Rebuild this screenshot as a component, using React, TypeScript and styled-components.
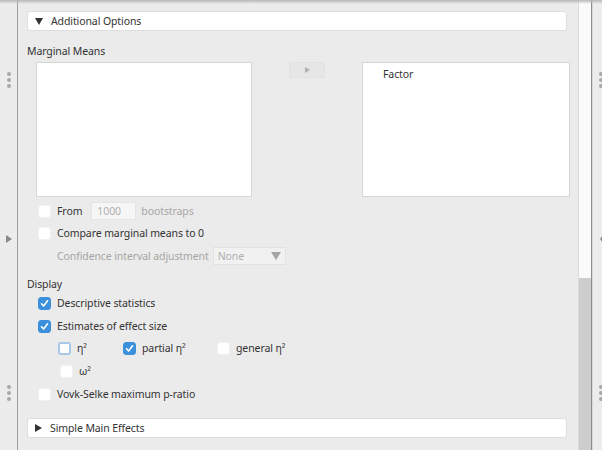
import React from "react";
import styled, { createGlobalStyle } from "styled-components";

const Global = createGlobalStyle`
  html, body { margin: 0; padding: 0; background: #ececec; }
  body { font-family: "Noto Sans", "DejaVu Sans", sans-serif; font-size: 10.5px; letter-spacing: -0.1px; color: #333; }
`;

const Page = styled.div`
  display: flex;
  width: 602px;
  height: 450px;
  overflow: hidden;
  position: relative;
  &::before {
    content: "";
    position: absolute;
    left: 0; right: 0; top: 0; height: 4px;
    background: linear-gradient(#b8b8b8, rgba(236,236,236,0));
    pointer-events: none;
  }
`;

const Rail = styled.div<{ $w: number; $side: "left" | "right" }>`
  width: ${p => p.$w}px;
  flex: none;
  background: #ececec;
  ${p => (p.$side === "left" ? "border-right: 1px solid #9e9e9e;" : "")}
  display: flex;
  flex-direction: column;
  align-items: ${p => (p.$side === "left" ? "center" : "flex-end")};
  padding-top: 72px;
  box-sizing: border-box;
`;

const Dots = styled.div<{ $mt?: number }>`
  display: flex;
  flex-direction: column;
  gap: 2px;
  margin-top: ${p => p.$mt ?? 0}px;
  & > span { width: 4px; height: 4px; border-radius: 50%; background: #a8a8a8; display: block; }
`;

const RailArrow = styled.div<{ $mt: number; $dir: "right" | "left" }>`
  margin-top: ${p => p.$mt}px;
  width: 0; height: 0;
  border-top: 4px solid transparent;
  border-bottom: 4px solid transparent;
  ${p => (p.$dir === "right" ? "border-left: 6px solid #8a8a8a;" : "border-right: 3px solid #8a8a8a;")}
`;

const Main = styled.div`
  width: 560px;
  flex: none;
  background: #ebebeb;
  padding: 11px 0 0 9px;
  box-sizing: border-box;
  display: flex;
  flex-direction: column;
`;

const Scroll = styled.div`
  width: 13px;
  flex: none;
  display: flex;
  flex-direction: column;
  border-right: 1px solid #8e8e8e;
  box-shadow: 1px 0 0 #d8d8d8;
  margin-right: 2px;
`;
const Track = styled.div`
  height: 278px; background: #fafafa; border-left: 1px solid #dcdcdc;
`;
const Thumb = styled.div`
  flex: 1; background: #cdcdcd; border-left: 1px solid #dcdcdc;
`;

const Section = styled.div`
  width: 540px;
  height: 20px;
  box-sizing: border-box;
  background: #fff;
  border: 1px solid #dedede;
  border-radius: 3px;
  display: flex;
  align-items: center;
  padding-left: 7px;
  gap: 8px;
  font-size: 10.5px;
  color: #333;
`;

const Tri = styled.span<{ $down?: boolean }>`
  width: 0; height: 0;
  ${p =>
    p.$down
      ? "border-left: 4px solid transparent; border-right: 4px solid transparent; border-top: 7px solid #333; margin-top: 1px;"
      : "border-top: 4px solid transparent; border-bottom: 4px solid transparent; border-left: 7px solid #333;"}
`;

const Label = styled.div<{ $mt: number }>`
  margin-top: ${p => p.$mt}px;
  line-height: 14px;
`;

const Lists = styled.div`
  display: flex;
  margin-top: 4px;
  align-items: flex-start;
`;

const ListBox = styled.div<{ $w: number; $ml: number }>`
  width: ${p => p.$w}px;
  height: 135px;
  margin-left: ${p => p.$ml}px;
  background: #fff;
  border: 1px solid #d6d6d6;
  box-sizing: border-box;
  padding: 4px 0 0 20px;
`;

const MoveBtn = styled.div`
  width: 36px;
  height: 16px;
  margin-left: 37px;
  box-sizing: border-box;
  border: 1px solid #e2e2e2;
  border-radius: 2px;
  background: #e6e6e6;
  display: flex;
  align-items: center;
  justify-content: center;
  &::after {
    content: "";
    border-top: 3px solid transparent;
    border-bottom: 3px solid transparent;
    border-left: 5px solid #b0b0b0;
  }
`;

const Row = styled.div<{ $ml: number; $mt: number }>`
  display: flex;
  align-items: center;
  margin-left: ${p => p.$ml}px;
  margin-top: ${p => p.$mt}px;
  height: 18px;
`;

const Box = styled.span<{ $checked?: boolean; $focus?: boolean }>`
  width: 13px;
  height: 13px;
  box-sizing: border-box;
  border-radius: 3px;
  flex: none;
  margin-right: 6px;
  display: flex;
  align-items: center;
  justify-content: center;
  background: ${p => (p.$checked ? "#3c90dc" : "#fff")};
  border: ${p => (p.$focus ? "2px solid #a8c8ea" : p.$checked ? "1px solid #3c90dc" : "1px solid #f2f2f2")};
  svg { display: block; }
`;

const Item = styled.div<{ $w?: number }>`
  display: flex;
  align-items: center;
  ${p => (p.$w ? `width: ${p.$w}px;` : "")}
`;

const Text = styled.span<{ $muted?: boolean }>`
  color: ${p => (p.$muted ? "#a6a6a6" : "#333")};
  white-space: nowrap;
`;

const NumInput = styled.span`
  width: 45px;
  height: 18px;
  box-sizing: border-box;
  margin: 0 5px 0 9px;
  background: #f6f6f6;
  border: 1px solid #e4e4e4;
  color: #b0b0b0;
  padding-left: 5px;
  display: flex;
  align-items: center;
`;

const Select = styled.span`
  width: 73px;
  height: 18px;
  margin-left: 4px;
  box-sizing: border-box;
  background: #f1f1f1;
  border: 1px solid #e2e2e2;
  color: #b0b0b0;
  padding: 0 4px;
  display: flex;
  align-items: center;
  justify-content: space-between;
  &::after {
    content: "";
    border-left: 5px solid transparent;
    border-right: 5px solid transparent;
    border-top: 8px solid #a4a4a4;
  }
`;

const Spacer = styled.div`
  height: 15px;
`;

const Check = () => (
  <svg width="9" height="9" viewBox="0 0 9 9">
    <path d="M1.5 4.8 L3.6 7 L7.6 1.8" fill="none" stroke="#fff" strokeWidth="1.6" strokeLinecap="round" strokeLinejoin="round" />
  </svg>
);

const CB = ({ checked, focus }: { checked?: boolean; focus?: boolean }) => (
  <Box $checked={checked} $focus={focus}>{checked && <Check />}</Box>
);

export default function App() {
  return (
    <>
      <Global />
      <Page>
        <Rail $w={18} $side="left">
          <Dots><span /><span /><span /></Dots>
          <RailArrow $mt={147} $dir="right" />
          <Dots $mt={142}><span /><span /><span /></Dots>
        </Rail>
        <Main>
          <Section><Tri $down />Additional Options</Section>
          <Label $mt={13}>Marginal Means</Label>
          <Lists>
            <ListBox $w={216} $ml={9} />
            <MoveBtn />
            <ListBox $w={208} $ml={37}>Factor</ListBox>
          </Lists>
          <Row $ml={11} $mt={5}>
            <CB /><Text>From</Text><NumInput>1000</NumInput><Text $muted>bootstraps</Text>
          </Row>
          <Row $ml={11} $mt={4}>
            <CB /><Text>Compare marginal means to 0</Text>
          </Row>
          <Row $ml={30} $mt={5}>
            <Text $muted>Confidence interval adjustment</Text><Select>None</Select>
          </Row>
          <Label $mt={12}>Display</Label>
          <Row $ml={11} $mt={3}>
            <CB checked /><Text>Descriptive statistics</Text>
          </Row>
          <Row $ml={11} $mt={5}>
            <CB checked /><Text>Estimates of effect size</Text>
          </Row>
          <Row $ml={31} $mt={4}>
            <Item $w={65}><CB focus /><Text>η²</Text></Item>
            <Item $w={94}><CB checked /><Text>partial η²</Text></Item>
            <Item><Box /><Text>general η²</Text></Item>
          </Row>
          <Row $ml={33} $mt={5}>
            <CB /><Text>ω²</Text>
          </Row>
          <Row $ml={11} $mt={5}>
            <CB /><Text>Vovk-Selke maximum p-ratio</Text>
          </Row>
          <Spacer />
          <Section><Tri />Simple Main Effects</Section>
        </Main>
        <Scroll>
          <Track />
          <Thumb />
        </Scroll>
        <Rail $w={9} $side="right">
          <Dots><span /><span /><span /></Dots>
          <RailArrow $mt={147} $dir="left" />
          <Dots $mt={142}><span /><span /><span /></Dots>
        </Rail>
      </Page>
    </>
  );
}
